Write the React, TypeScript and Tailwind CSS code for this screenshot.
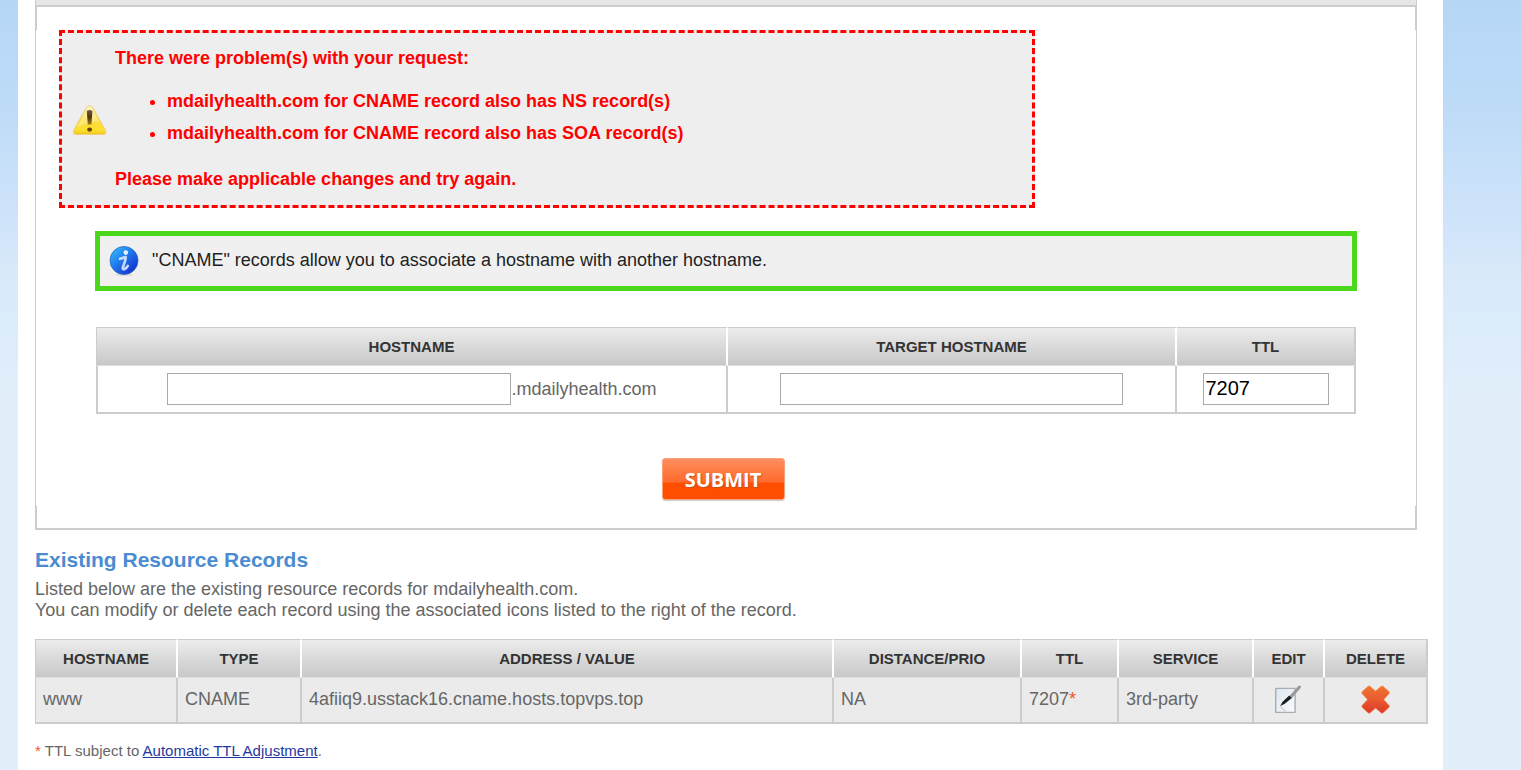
const records = [
	{
		host: "www",
		type: "CNAME",
		value: "4afiiq9.usstack16.cname.hosts.topvps.top",
		prio: "NA",
		ttl: "7207",
		service: "3rd-party",
	},
];

const th =
	"h-[39px] border-t border-b border-r-2 border-t-[#ccc] border-b-[#ddd] border-r-white last:border-r-[#ccc] bg-linear-to-b from-[#ececec] to-[#c8c8c8] bg-clip-padding text-center text-[15px] leading-5 font-bold text-[#333]";
const td = "h-[46px] border-r-2 border-b-2 border-[#ccc] px-[7px] pb-[2px]";
const input = "h-8 border border-[#a9a9a9] bg-white px-[2px] pb-[2px] text-[20px] leading-6 text-black";

function WarningIcon() {
	return (
		<svg width="36" height="34" viewBox="0 0 36 34" aria-hidden="true">
			<defs>
				<linearGradient id="warn" x1="0" y1="0" x2="0" y2="1">
					<stop offset="0" stopColor="#fdf3b8" />
					<stop offset="0.5" stopColor="#fbdc3e" />
					<stop offset="0.85" stopColor="#fde02c" />
					<stop offset="1" stopColor="#f3c321" />
				</linearGradient>
				<linearGradient id="bang" x1="0" y1="0" x2="0" y2="1">
					<stop offset="0" stopColor="#6f5a3c" />
					<stop offset="0.5" stopColor="#53350f" />
					<stop offset="1" stopColor="#a07a20" />
				</linearGradient>
			</defs>
			<path
				d="M14.2 6 Q17.6 1.2 21 6 L33.4 28 Q35 32.5 30.6 32.5 H4.6 Q0.2 32.5 1.8 28 Z"
				fill="url(#warn)"
				stroke="#edcf7c"
				strokeWidth="1"
			/>
			<path d="M15 7 Q17.6 3.6 20.2 7 L27.4 20 Q17 18.5 6.8 25 L5.4 24.4 Z" fill="#fff" opacity="0.3" />
			<path d="M14.8 9.6 Q14.8 8 17.6 8 Q20.4 8 20.4 9.6 L19.4 22.6 H15.8 Z" fill="url(#bang)" />
			<ellipse cx="17.6" cy="27.6" rx="2.5" ry="2.1" fill="#65440f" />
		</svg>
	);
}

function InfoIcon() {
	return (
		<svg width="32" height="32" viewBox="0 0 32 32" aria-hidden="true">
			<defs>
				<linearGradient id="info" x1="0.1" y1="0.1" x2="0.85" y2="0.9">
					<stop offset="0" stopColor="#35b4fa" />
					<stop offset="0.45" stopColor="#2079ee" />
					<stop offset="1" stopColor="#1431cf" />
				</linearGradient>
			</defs>
			<ellipse cx="16" cy="29.8" rx="9" ry="1.4" fill="#dcdcdc" />
			<circle cx="16" cy="15.5" r="14" fill="url(#info)" stroke="#2a66b8" strokeWidth="0.8" />
			<circle cx="17.8" cy="7.6" r="2.3" fill="#e6f2ff" />
			<path
				d="M12 13.8 Q15.6 12.8 17.6 12 Q18 13 17 16.2 L14.8 22.4 Q14.4 24.8 16.6 24 Q18.6 23 19.8 20.8"
				fill="none"
				stroke="#c6dcff"
				strokeWidth="2.6"
				strokeLinecap="round"
				strokeLinejoin="round"
			/>
		</svg>
	);
}

function EditIcon() {
	return (
		<svg width="28" height="30" viewBox="0 0 28 30" aria-hidden="true">
			<defs>
				<linearGradient id="paper" x1="0" y1="0" x2="1" y2="1">
					<stop offset="0" stopColor="#dbe5f0" />
					<stop offset="1" stopColor="#fbfcfd" />
				</linearGradient>
			</defs>
			<rect x="0.7" y="3.4" width="19.4" height="24" rx="0.5" fill="url(#paper)" stroke="#aaadb0" strokeWidth="1.4" />
			<path d="M5.4 20.5 Q6.5 24.5 11.5 26" fill="none" stroke="#cfd3d6" strokeWidth="1.2" />
			<path d="M14 11.4 L23.4 0.8 Q25.6 0 26.2 2.2 L16.6 13.6 Z" fill="#9a9a9a" />
			<path d="M14.2 10.6 L16.8 13 L9.8 18.8 L5.2 21 L7.4 17 Z" fill="#1c1c1c" />
		</svg>
	);
}

function DeleteIcon() {
	return (
		<svg width="30" height="30" viewBox="0 0 30 30" aria-hidden="true">
			<defs>
				<linearGradient id="cross" x1="0" y1="0" x2="0" y2="1">
					<stop offset="0" stopColor="#f0742f" />
					<stop offset="0.5" stopColor="#ea5a31" />
					<stop offset="1" stopColor="#d93a29" />
				</linearGradient>
			</defs>
			<path
				d="M7.2 1.2 Q8.2 0.6 9.2 1.4 L14.6 6 L20 1.4 Q21 0.6 22 1.2 L28 6.6 Q28.9 7.6 28.2 8.6 L22.8 14.6 L28.2 20.6 Q28.9 21.6 28 22.6 L22 28 Q21 28.7 20 27.8 L14.6 23.2 L9.2 27.8 Q8.2 28.7 7.2 28 L1.2 22.6 Q0.4 21.6 1 20.6 L6.4 14.6 L1 8.6 Q0.4 7.6 1.2 6.6 Z"
				fill="url(#cross)"
				stroke="#f0955f"
				strokeWidth="0.7"
				strokeLinejoin="round"
			/>
		</svg>
	);
}

function App() {
	return (
		<div className="min-h-screen bg-[linear-gradient(to_bottom,#b5d6f5_0px,#bedcf8_110px,#d2e5fa_240px,#d8e9fa_270px,#e2effb_400px,#e2eefa_520px)] pr-[78px] pl-[18px] font-['Liberation_Sans',Arial,sans-serif] text-[18px] leading-[21px] text-[#666]">
			<main className="min-h-screen bg-white pr-[15px] pl-[17px]">
				<div className="mr-[11px]">
					<div className="h-[5px] border-x border-[#ccc] bg-[#e6e6e6]" />
					<div className="h-[25px] border-x-2 border-t-2 border-[#ccc]" />

					<form className="border-x border-[#ccc]" onSubmit={(e) => e.preventDefault()}>
						{/* Errors */}
						<div
							role="alert"
							className="ml-[23px] flex w-[976px] max-w-full items-center border-3 border-dashed border-[red] bg-[#eee] pt-[15px] pb-4 pl-[10px] leading-5 font-bold text-[red]"
						>
							<WarningIcon />
							<div className="ml-[7px]">
								<p>There were problem(s) with your request:</p>
								<ul className="mt-[17px] mb-5 list-disc pl-[52px] leading-8">
									<li>mdailyhealth.com for CNAME record also has NS record(s)</li>
									<li>mdailyhealth.com for CNAME record also has SOA record(s)</li>
								</ul>
								<p>Please make applicable changes and try again.</p>
							</div>
						</div>

						<div className="mx-[59px] mt-[23px] flex h-[60px] items-center gap-3 border-5 border-[#4bd71b] bg-[#f0f0f0] pl-2 text-[#222]">
							<InfoIcon />
							<p className="pb-[2px]">"CNAME" records allow you to associate a hostname with another hostname.</p>
						</div>

						<div className="mx-[60px] mt-9">
							<table className="w-full table-fixed border-separate border-spacing-0">
								<colgroup>
									<col />
									<col className="w-[449px]" />
									<col className="w-[179px]" />
								</colgroup>
								<thead>
									<tr>
										<th className={`${th} border-l border-l-[#ccc]`}>
											<label htmlFor="hostname">HOSTNAME</label>
										</th>
										<th className={th}>
											<label htmlFor="target">TARGET HOSTNAME</label>
										</th>
										<th className={th}>
											<label htmlFor="ttl">TTL</label>
										</th>
									</tr>
								</thead>
								<tbody>
									<tr>
										<td className="h-12 border-r-2 border-b-2 border-l-2 border-[#ccc]">
											<div className="flex items-center justify-center">
												<input id="hostname" type="text" className={`${input} w-[344px]`} />
												<span>.mdailyhealth.com</span>
											</div>
										</td>
										<td className="h-12 border-r-2 border-b-2 border-[#ccc]">
											<input id="target" type="text" className={`${input} mx-auto block w-[343px]`} />
										</td>
										<td className="h-12 border-r-2 border-b-2 border-[#ccc]">
											<input id="ttl" type="text" defaultValue="7207" className={`${input} mx-auto block w-[126px]`} />
										</td>
									</tr>
								</tbody>
							</table>
						</div>

						<div className="flex justify-center pt-11 pr-[6px] pb-[6px]">
							<button
								type="submit"
								className="h-[42px] w-[123px] rounded-[3px] border border-[#f9a27c] bg-[linear-gradient(to_bottom,#ff8e5e_0%,#ff6a2c_58%,#ff4e00_60%,#ff4e00_100%)] pt-[2px] font-['Open_Sans',sans-serif] text-[20px] leading-6 font-bold text-white shadow-[0px_1px_1px_#ccc] text-shadow-[1px_1px_1px_#c2501c]"
							>
								SUBMIT
							</button>
						</div>
					</form>

					<div className="h-6 border-x-2 border-b-2 border-[#ccc]" />
				</div>

				{/* Existing records */}
				<h2 className="mt-[18px] text-[21px] leading-6 font-bold text-[#4a8bd2]">Existing Resource Records</h2>
				<p className="mt-[7px]">
					Listed below are the existing resource records for mdailyhealth.com.
					<br />
					You can modify or delete each record using the associated icons listed to the right of the record.
				</p>

				<table className="mt-[18px] w-full table-fixed border-separate border-spacing-0">
					<colgroup>
						<col className="w-[143px]" />
						<col className="w-[124px]" />
						<col />
						<col className="w-[188px]" />
						<col className="w-[97px]" />
						<col className="w-[135px]" />
						<col className="w-[71px]" />
						<col className="w-[103px]" />
					</colgroup>
					<thead>
						<tr>
							<th className={`${th} border-l border-l-[#ccc]`}>HOSTNAME</th>
							<th className={th}>TYPE</th>
							<th className={th}>ADDRESS / VALUE</th>
							<th className={th}>DISTANCE/PRIO</th>
							<th className={th}>TTL</th>
							<th className={th}>SERVICE</th>
							<th className={th}>EDIT</th>
							<th className={th}>DELETE</th>
						</tr>
					</thead>
					<tbody className="bg-[#ebebeb]">
						{records.map((r) => (
							<tr key={r.host}>
								<td className={`${td} border-l`}>{r.host}</td>
								<td className={td}>{r.type}</td>
								<td className={td}>{r.value}</td>
								<td className={td}>{r.prio}</td>
								<td className={td}>
									{r.ttl}
									<span className="text-[#f0522d]">*</span>
								</td>
								<td className={td}>{r.service}</td>
								<td className="border-r-2 border-b-2 border-[#ccc]">
									<button type="button" aria-label="Edit" className="mx-auto block">
										<EditIcon />
									</button>
								</td>
								<td className="border-r-2 border-b-2 border-[#ccc]">
									<button type="button" aria-label="Delete" className="mx-auto block">
										<DeleteIcon />
									</button>
								</td>
							</tr>
						))}
					</tbody>
				</table>

				<p className="mt-[17px] text-[15px] leading-5">
					<span className="text-[#f0522d]">*</span> TTL subject to{" "}
					<a href="#ttl" className="text-[#1f3a9c] underline">
						Automatic TTL Adjustment
					</a>
					.
				</p>
			</main>
		</div>
	);
}

export default App;
